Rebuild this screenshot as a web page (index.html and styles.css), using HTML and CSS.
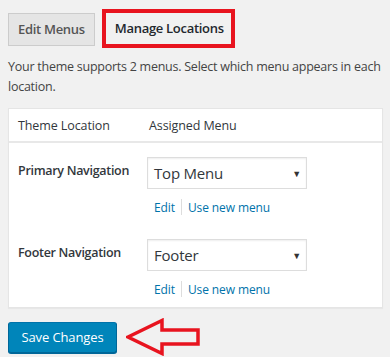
FILE: index.html
```html
<!DOCTYPE html>
<html lang="en">
<head>
  <meta charset="UTF-8" />
  <title>Menus - Manage Locations</title>
  <link rel="stylesheet" href="styles.css">
</head>
<body>
  <div class="wrap">
    <nav class="tabs">
      <a class="tab" href="#edit">Edit Menus</a>
      <a class="tab tab-active" href="#locations">Manage Locations</a>
    </nav>

    <p class="intro">Your theme supports 2 menus. Select which menu appears in each location.</p>

    <div class="locations">
      <div class="loc-head">
        <span>Theme Location</span>
        <span>Assigned Menu</span>
      </div>

      <div class="loc-row">
        <label class="loc-name">Primary Navigation</label>
        <div class="loc-field">
          <div class="fake-select"><span>Top Menu</span><span class="caret">&#9660;</span></div>
          <div class="loc-links">
            <a href="#">Edit</a>
            <span class="sep"></span>
            <a href="#">Use new menu</a>
          </div>
        </div>
      </div>

      <div class="loc-row">
        <label class="loc-name">Footer Navigation</label>
        <div class="loc-field">
          <div class="fake-select"><span>Footer</span><span class="caret">&#9660;</span></div>
          <div class="loc-links">
            <a href="#">Edit</a>
            <span class="sep"></span>
            <a href="#">Use new menu</a>
          </div>
        </div>
      </div>
    </div>

    <div class="actions">
      <button class="btn-save">Save Changes</button>
      <svg class="pointer" width="76" height="38" viewBox="0 0 76 38">
        <path d="M2 19 L36 2.5 L36 12 L72 12 L72 26 L36 26 L36 35.5 Z" fill="none" stroke="#e8141f" stroke-width="3.5" stroke-linejoin="miter"/>
      </svg>
    </div>
  </div>
  <div class="bottom-line"></div>
</body>
</html>
```

FILE: styles.css
```css
body {
  margin: 0;
  background: #f1f1f1;
  color: #444;
  font-family: 'Open Sans', 'Noto Sans', sans-serif;
  font-size: 12.5px;
  letter-spacing: -0.1px;
}
.wrap {
  padding: 9px 7px 0 8px;
}
.tabs {
  display: flex;
  align-items: flex-start;
  gap: 7px;
}
.tab {
  display: block;
  text-decoration: none;
  font-weight: 600;
  font-size: 13px;
  letter-spacing: -0.3px;
}
.tabs .tab:first-child {
  margin-top: 4px;
  height: 31px;
  line-height: 31px;
  padding: 0 9px;
  background: #e5e5e5;
  border: 1px solid #ccc;
  color: #555;
}
.tab-active {
  height: 31px;
  line-height: 31px;
  padding: 0 7px 0 9px;
  border: 4px solid #e8141f;
  background: #f1f1f1;
  color: #23282d;
}
.intro {
  margin: 9px 0 12px;
  line-height: 19.5px;
  letter-spacing: -0.25px;
}
.locations {
  background: #fff;
  border: 1px solid #e5e5e5;
  box-shadow: 0 1px 1px rgba(0,0,0,0.04);
}
.loc-head {
  display: grid;
  grid-template-columns: 131px 1fr;
  height: 32px;
  line-height: 34px;
  padding: 0 9px;
  border-bottom: 2px solid #e8e8e8;
  color: #32373c;
}
.loc-row {
  display: grid;
  grid-template-columns: 129px 1fr;
  padding: 14px 9px 10px;
}
.loc-name {
  font-weight: 600;
  letter-spacing: -0.3px;
  color: #32373c;
  padding-top: 4px;
  line-height: 20px;
}
.fake-select {
  display: flex;
  justify-content: space-between;
  align-items: center;
  box-sizing: border-box;
  width: 160px;
  height: 32px;
  padding: 0 5px 0 6px;
  border: 1px solid #ddd;
  box-shadow: inset 0 1px 2px rgba(0,0,0,0.07);
  font-size: 15px;
  letter-spacing: -0.2px;
  color: #32373c;
}
.caret {
  font-size: 9px;
  color: #333;
}
.loc-links {
  display: flex;
  align-items: center;
  gap: 6px;
  margin-top: 10px;
  padding-left: 7px;
  height: 16px;
  font-size: 12px;
}
.loc-links a {
  color: #0073aa;
  text-decoration: none;
}
.sep {
  width: 1px;
  height: 16px;
  background: #ddd;
}
.actions {
  display: flex;
  align-items: center;
  gap: 9px;
  margin-top: 10px;
}
.btn-save {
  width: 109px;
  height: 31px;
  background: #0085ba;
  border: 1px solid #0073aa;
  border-color: #0073aa #006799 #006799;
  border-radius: 3px;
  box-shadow: 0 1px 0 #006799;
  color: #fff;
  font-family: inherit;
  font-size: 13px;
  letter-spacing: -0.1px;
}
.bottom-line {
  margin-top: 6px;
  height: 2px;
  background: #555;
}
```
